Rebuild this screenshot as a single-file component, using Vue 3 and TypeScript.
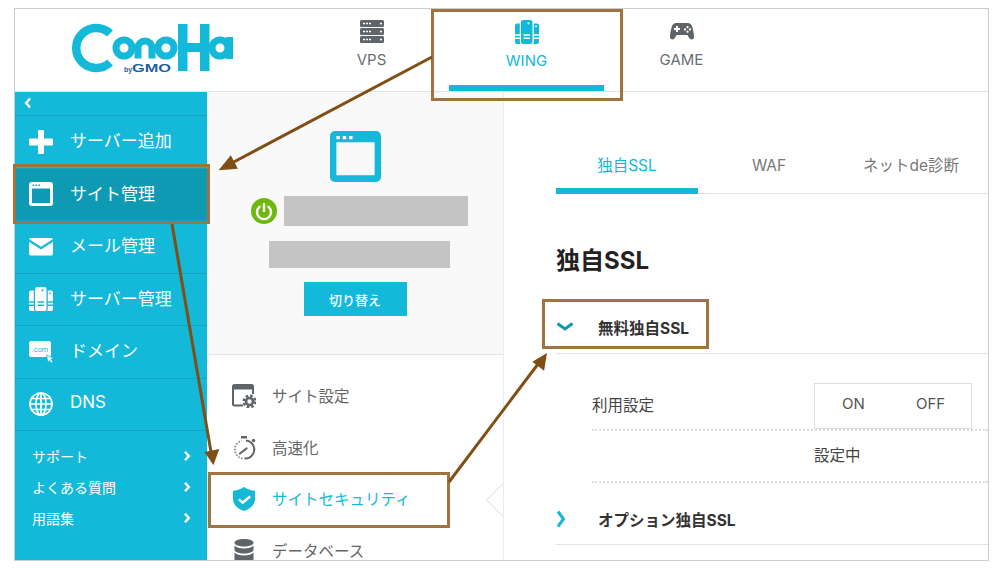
<script setup lang="ts">
const icons: Record<string, string> = {
  plus: '<path d="M9 1a1 1 0 0 1 1-1h4a1 1 0 0 1 1 1v7.500h8a1 1 0 0 1 1 1v5a1 1 0 0 1-1 1h-8V23a1 1 0 0 1-1 1h-4a1 1 0 0 1-1-1v-7.500H1a1 1 0 0 1-1-1v-5a1 1 0 0 1 1-1h8z"/>',
  site: '<path fill-rule="evenodd" d="M3 0h18a3 3 0 0 1 3 3v18a3 3 0 0 1-3 3H3a3 3 0 0 1-3-3V3a3 3 0 0 1 3-3zM3 6.500V21h18V6.500zM3.500 2.500v1.500H5V2.500zM6.500 2.500v1.500H8V2.500zM9.500 2.500v1.500H11V2.500z"/>',
  mail: '<path d="M2 3h20c1 0 1.600.6 1.800 1.300L12 11.800.2 4.300C.4 3.600 1 3 2 3z"/><path d="M0 6.800l12 7.700 12-7.700V18.500a2 2 0 0 1-2 2H2a2 2 0 0 1-2-2z"/>',
  server: '<path fill-rule="evenodd" d="M9 0h6.500A2 2 0 0 1 17.500 2v20a2 2 0 0 1-2 2H8a2 2 0 0 1-2-2V2.500A2.500 2.500 0 0 1 8.500 0zM13.500 2.300a1 1 0 1 0 .01 0zM8.500 14.200v1.600h6.500v-1.600zM8.500 17.500v1.600h6.500v-1.600z"/><path fill-rule="evenodd" d="M4.800 3.500v17.500q0 2 .8 3H2a2 2 0 0 1-2-2V5.500a2 2 0 0 1 2-2zM0 14.200v1.600h4.800v-1.600zM0 17.500v1.600h4.800v-1.600z"/><path fill-rule="evenodd" d="M18.800 3.500H22a2 2 0 0 1 2 2V22a2 2 0 0 1-2 2h-3.800q.6-1 .6-3zM21 5.500a.9.9 0 1 0 .01 0zM18.800 14.200v1.600H24v-1.600zM18.800 17.500v1.600H24v-1.600z"/>',
  domain: '<rect x="0" y="1" width="22" height="16" rx="2"/><text x="11" y="12" text-anchor="middle" font-size="7.500" font-family="Liberation Sans, sans-serif" fill="#14b8d9">.com</text><path d="M17.500 15l7 3-2.500 1.300 2 2.500-1.500 1.200-2-2.500-1.500 2.300z" stroke="#14b8d9" stroke-width=".8"/>',
  dns: '<g fill="none" stroke="#fff" stroke-width="1.700"><circle cx="12" cy="12" r="11"/><ellipse cx="12" cy="12" rx="5" ry="11"/><path d="M12 1v22M1 12h22M2.800 6.500h18.400M2.800 17.500h18.400"/></g>',
}

const menuItems = [
  { label: 'サーバー追加', icon: 'plus' },
  { label: 'サイト管理', icon: 'site', active: true },
  { label: 'メール管理', icon: 'mail' },
  { label: 'サーバー管理', icon: 'server' },
  { label: 'ドメイン', icon: 'domain' },
  { label: 'DNS', icon: 'dns' },
]

const subLinks = ['サポート', 'よくある質問', '用語集']
const tabs = ['独自SSL', 'WAF', 'ネットde診断']
</script>

<template>
  <div class="page">
    <div class="frame">
      <header class="header">
        <div class="logo" aria-label="ConoHa by GMO">
          <svg width="170" height="54" viewBox="70 22 170 54">
            <g fill="none" stroke="#14b8d9">
              <path d="M110 33.500a20 20 0 1 0 0 29" stroke-width="8.500" />
              <circle cx="124" cy="48" r="8" stroke-width="7" />
              <path d="M138 58.500V48a7 7 0 0 1 14 0v10.500" stroke-width="7" />
              <circle cx="166" cy="48" r="8" stroke-width="7" />
              <circle cx="220" cy="48" r="8" stroke-width="7" />
            </g>
            <g fill="#14b8d9">
              <rect x="178" y="24" width="9.500" height="47" />
              <rect x="200" y="24" width="9.500" height="47" />
              <rect x="184" y="43" width="20" height="9" />
              <rect x="226" y="37" width="7" height="22" />
            </g>
            <text x="124" y="72" font-size="7" font-weight="700" fill="#1f5f9e" font-family="Liberation Sans, sans-serif">by</text>
            <text x="132" y="72" font-size="10" font-weight="700" fill="#1f5f9e" font-family="Liberation Sans, sans-serif" textLength="39" lengthAdjust="spacingAndGlyphs">GMO</text>
          </svg>
        </div>
        <nav class="nav">
          <a class="nav-item">
            <svg class="nav-icon" width="24" height="23" viewBox="0 0 24 23">
              <path fill-rule="evenodd" d="M1.500 0h21A1.500 1.500 0 0 1 24 1.500v4A1.500 1.500 0 0 1 22.500 7h-21A1.500 1.500 0 0 1 0 5.500v-4A1.500 1.500 0 0 1 1.500 0zM3 2.700v1.600h2V2.700zM6 2.700v1.600h2V2.700zM9 2.700v1.600h2V2.700zM21 2.400a1.100 1.100 0 1 0 .01 0z" />
              <path fill-rule="evenodd" d="M1.500 8h21A1.500 1.500 0 0 1 24 9.500v4a1.500 1.500 0 0 1-1.500 1.500h-21A1.500 1.500 0 0 1 0 13.500v-4A1.500 1.500 0 0 1 1.500 8zM3 10.700v1.600h2v-1.600zM6 10.700v1.600h2v-1.600zM9 10.700v1.600h2v-1.600zM21 10.400a1.100 1.100 0 1 0 .01 0z" />
              <path fill-rule="evenodd" d="M1.500 16h21a1.500 1.500 0 0 1 1.500 1.500v4a1.500 1.500 0 0 1-1.500 1.500h-21A1.500 1.500 0 0 1 0 21.500v-4A1.500 1.500 0 0 1 1.500 16zM3 18.700v1.600h2v-1.600zM6 18.700v1.600h2v-1.600zM9 18.700v1.600h2v-1.600zM21 18.400a1.100 1.100 0 1 0 .01 0z" />
            </svg>
            <span>VPS</span>
          </a>
          <a class="nav-item active">
            <svg class="nav-icon" width="24" height="24" viewBox="0 0 24 24" v-html="icons.server"></svg>
            <span>WING</span>
          </a>
          <a class="nav-item">
            <svg class="nav-icon" width="24" height="23" viewBox="0 0 24 23">
              <path fill-rule="evenodd" d="M6.500 3h11c2.800 0 4.200 1.500 5 4.500.8 3.200 1.500 6.500 1.500 9 0 1.800-1 3-2.300 3-1.200 0-2-.8-3-2.200L17.500 15h-11l-1.200 2.300c-1 1.400-1.800 2.200-3 2.200C1 19.500 0 18.300 0 16.500c0-2.500.7-5.800 1.500-9C2.300 4.500 3.700 3 6.500 3zM6 6v2H4v2h2v2h2v-2h2V8H8V6zM17.500 6a1.100 1.100 0 1 0 .01 0zM15 8.300a1.100 1.100 0 1 0 .01 0zM20 8.300a1.100 1.100 0 1 0 .01 0zM17.500 10.600a1.100 1.100 0 1 0 .01 0z" />
            </svg>
            <span>GAME</span>
          </a>
        </nav>
      </header>

      <div class="body">
        <aside class="sidebar">
          <div class="collapse">
            <svg width="8" height="12" viewBox="0 0 8 12"><path d="M6 1.500 2.200 6 6 10.500" /></svg>
          </div>
          <a v-for="item in menuItems" :key="item.label" class="menu-item" :class="{ active: item.active }">
            <svg class="menu-icon" width="24" height="24" viewBox="0 0 24 24" v-html="icons[item.icon]"></svg>
            <span>{{ item.label }}</span>
          </a>
          <ul class="sub-links">
            <li v-for="link in subLinks" :key="link">
              <span>{{ link }}</span>
              <svg width="8" height="12" viewBox="0 0 8 12"><path d="M2 1.800 5.800 6 2 10.200" /></svg>
            </li>
          </ul>
        </aside>

        <section class="middle">
          <div class="site-panel">
            <svg class="site-icon" width="51" height="51" viewBox="0 0 52 52">
              <path fill="#14b8d9" fill-rule="evenodd" d="M5 0h42a5 5 0 0 1 5 5v42a5 5 0 0 1-5 5H5a5 5 0 0 1-5-5V5a5 5 0 0 1 5-5zM6.500 11.500v33.500h39V11.500zM6.500 5v3.500h3.500V5zM13 5v3.500h3.500V5zM19.500 5v3.500H23V5z" />
            </svg>
            <div class="name-row">
              <svg width="26" height="26" viewBox="0 0 26 26">
                <circle cx="13" cy="13" r="13" fill="#6fb90f" />
                <path d="M8.500 8.800a7 7 0 1 0 9 0" fill="none" stroke="#fff" stroke-width="2.400" stroke-linecap="round" />
                <path d="M13 6v7" fill="none" stroke="#fff" stroke-width="2.400" stroke-linecap="round" />
              </svg>
              <div class="mask name-mask"></div>
            </div>
            <div class="mask domain-mask"></div>
            <button class="switch-button">切り替え</button>
          </div>

          <ul class="site-menu">
            <li>
              <svg width="24" height="24" viewBox="0 0 24 24">
                <path d="M11 21.500H2.500A1.500 1.500 0 0 1 1 20V2.500A1.500 1.500 0 0 1 2.500 1h17A1.500 1.500 0 0 1 21 2.500V10" fill="none" stroke="#5f6468" stroke-width="2" />
                <path d="M1 2h20v3.500H1z" fill="#5f6468" />
                <circle cx="17.500" cy="17.500" r="3.500" fill="none" stroke="#5f6468" stroke-width="2.600" />
                <circle cx="17.500" cy="17.500" r="5.800" fill="none" stroke="#5f6468" stroke-width="2.400" stroke-dasharray="2.600 1.950" />
              </svg>
              <span>サイト設定</span>
            </li>
            <li>
              <svg width="24" height="24" viewBox="0 0 24 24">
                <path d="M14 4.500a9 9 0 1 1-1.500 18" fill="none" stroke="#5f6468" stroke-width="2" />
                <path d="M10.500 22.400a9 9 0 0 1-1-17.600" fill="none" stroke="#8a8e91" stroke-width="2" stroke-dasharray="1.500 1.500" />
                <path d="M9 0h6v2.500h-6z" fill="#5f6468" />
                <circle cx="21.500" cy="4.500" r="1.700" fill="#5f6468" />
                <path d="M8 17.500l6.500-5" fill="none" stroke="#5f6468" stroke-width="2.200" stroke-linecap="round" />
              </svg>
              <span>高速化</span>
            </li>
            <li class="active">
              <svg width="24" height="24" viewBox="0 0 24 24">
                <path fill="#14b8d9" fill-rule="evenodd" d="M12 0c3 2.200 7 3.500 11 3.800v8.200c0 5.500-4.500 9.700-11 12C5.500 21.700 1 17.500 1 12V3.800C5 3.500 9 2.200 12 0zM17.500 8.500 10.500 14l-3-2.500-1.500 1.800 4.700 4 8.400-7z" />
              </svg>
              <span>サイトセキュリティ</span>
            </li>
            <li>
              <svg width="24" height="24" viewBox="0 0 24 24">
                <path fill="#5f6468" d="M12 0c5 0 9.500 1.500 9.500 3.700S17 7.400 12 7.400 2.500 5.900 2.500 3.700 7 0 12 0z" />
                <path fill="#5f6468" d="M2.500 6.500C4 8.500 8 9.500 12 9.500s8-1 9.500-3v4.200c0 2.200-4.500 3.700-9.500 3.700s-9.500-1.500-9.500-3.700z" />
                <path fill="#5f6468" d="M2.500 13.500c1.500 2 5.500 3 9.500 3s8-1 9.500-3v6.800c0 2.200-4.500 3.700-9.500 3.700s-9.500-1.500-9.500-3.700z" />
              </svg>
              <span>データベース</span>
            </li>
          </ul>
          <div class="notch"></div>
        </section>

        <main class="content">
          <div class="tabs">
            <a v-for="(tab, i) in tabs" :key="tab" class="tab" :class="{ active: i === 0 }">{{ tab }}</a>
          </div>
          <h2 class="title">独自SSL</h2>

          <div class="accordion open">
            <svg width="18" height="10" viewBox="0 0 18 10"><path d="M1.500 1.500 9 7l7.500-5.500" /></svg>
            <span>無料独自SSL</span>
          </div>
          <div class="setting-row first">
            <span class="setting-label">利用設定</span>
            <div class="toggle"><span>ON</span><span>OFF</span></div>
          </div>
          <div class="setting-row status">
            <span class="setting-label"></span>
            <span>設定中</span>
          </div>
          <div class="accordion closed">
            <svg width="10" height="18" viewBox="0 0 10 18"><path d="M2 1.500 7.500 9 2 16.500" /></svg>
            <span>オプション独自SSL</span>
          </div>
        </main>
      </div>
    </div>

    <!-- annotations drawn over the screenshot -->
    <div class="note note-wing"></div>
    <div class="note note-site"></div>
    <div class="note note-security"></div>
    <div class="note note-ssl"></div>
    <svg class="arrows" width="1000" height="568" viewBox="0 0 1000 568">
      <g stroke="#7f4f16" stroke-width="3" fill="#7f4f16">
        <line x1="432" y1="57" x2="230" y2="164" />
        <path d="M222 168.500l8.500-10.500 5 9.500z" />
        <line x1="172" y1="224" x2="211" y2="452" />
        <path d="M213 462l-6-9 10-2z" />
        <line x1="449" y1="482" x2="538" y2="364" />
        <path d="M545 356l-2 12-8-6z" />
      </g>
    </svg>
  </div>
</template>

<style>
body {
  background: #fff;
}
</style>

<style scoped>
.page {
  position: relative;
  width: 1000px;
  height: 568px;
  padding: 8px 0 0 14px;
  box-sizing: border-box;
  overflow: hidden;
  font-family: Inter, 'Noto Sans CJK JP', sans-serif;
  color: #666;
}

.frame {
  width: 975px;
  height: 553px;
  box-sizing: border-box;
  border: 1px solid #ccc;
  overflow: hidden;
  display: flex;
  flex-direction: column;
}

.header {
  position: relative;
  height: 83px;
  flex: none;
  box-sizing: border-box;
  border-bottom: 1px solid #e2e2e2;
  display: flex;
}

.logo {
  width: 279px;
  padding: 13px 0 0 55px;
  box-sizing: border-box;
}

.nav {
  display: flex;
}

.nav-item {
  width: 155px;
  box-sizing: border-box;
  padding-top: 11px;
  display: flex;
  flex-direction: column;
  align-items: center;
  font-size: 15px;
  color: #6a6e72;
  fill: #5f6468;
}

.nav-item span {
  margin-top: 7px;
}

.nav-icon {
  flex: none;
}

.nav-item.active {
  color: #14b8d9;
  fill: #14b8d9;
  border-bottom: 6px solid #14b8d9;
}

.body {
  flex: 1;
  min-height: 0;
  display: flex;
}

.sidebar {
  width: 192px;
  flex: none;
  background: #14b8d9;
  color: #fff;
  fill: #fff;
}

.collapse {
  height: 24px;
  box-sizing: border-box;
  border-bottom: 1px solid #10a5c3;
  padding: 5px 0 0 9px;
}

.collapse svg {
  display: block;
}

.collapse svg path,
.sub-links svg path {
  fill: none;
  stroke: #fff;
  stroke-width: 2.4;
}

.menu-item {
  height: 52.5px;
  box-sizing: border-box;
  border-bottom: 1px solid #10a5c3;
  padding-left: 14px;
  display: flex;
  align-items: center;
  gap: 17px;
  font-size: 17px;
}

.menu-item span {
  padding-bottom: 4px;
}

.menu-item.active {
  background: #0f9ab4;
}

.sub-links {
  list-style: none;
  margin: 0;
  padding: 10px 16px 0 17px;
  font-size: 14px;
}

.sub-links li {
  height: 30.8px;
  display: flex;
  align-items: center;
  justify-content: space-between;
}

.middle {
  position: relative;
  width: 297px;
  flex: none;
  box-sizing: border-box;
  border-right: 1px solid #ececec;
  overflow: hidden;
}

.site-panel {
  height: 263px;
  box-sizing: border-box;
  background: #f9f9f9;
  border-bottom: 1px solid #e6e6e6;
  padding-top: 39px;
  display: flex;
  flex-direction: column;
  align-items: center;
}

.site-icon {
  flex: none;
}

.name-row {
  margin: 14px 0 0 8px;
  display: flex;
  align-items: center;
  gap: 7px;
}

.mask {
  background: #c4c4c4;
}

.name-mask {
  width: 184px;
  height: 30px;
}

.domain-mask {
  width: 181px;
  height: 27px;
  margin: 15px 0 0 8px;
}

.switch-button {
  width: 103px;
  height: 34px;
  margin-top: 14px;
  border: none;
  background: #14b8d9;
  color: #fff;
  font-family: inherit;
  font-size: 13px;
  font-weight: 500;
}

.site-menu {
  list-style: none;
  margin: 0;
  padding: 15px 0 0 25px;
}

.site-menu li {
  height: 51.7px;
  display: flex;
  align-items: center;
  gap: 16px;
  font-size: 15.5px;
  color: #666;
}

.site-menu li span {
  padding-bottom: 2px;
}

.site-menu li.active {
  color: #14b8d9;
}

.notch {
  position: absolute;
  right: -12px;
  top: 396px;
  width: 22px;
  height: 22px;
  background: #fff;
  border: 1px solid #e6e6e6;
  transform: rotate(45deg);
}

.content {
  flex: 1;
  min-width: 0;
  padding: 48px 0 0 52px;
  background: #fff;
}

.tabs {
  display: flex;
  height: 54px;
  box-shadow: inset 0 -1px 0 #e2e2e2;
}

.tab {
  width: 142px;
  box-sizing: border-box;
  padding-top: 15px;
  line-height: 22px;
  text-align: center;
  font-size: 15.5px;
  color: #777;
}

.tab.active {
  color: #14b8d9;
  border-bottom: 6px solid #14b8d9;
}

.title {
  margin: 50px 0 0;
  font-size: 24px;
  line-height: 34px;
  font-weight: 700;
  color: #222;
}

.accordion {
  display: flex;
  align-items: center;
  font-size: 15.5px;
  font-weight: 700;
  color: #333;
  border-bottom: 1px solid #e2e2e2;
  box-sizing: border-box;
}

.accordion svg {
  flex: none;
  fill: none;
  stroke: #14b8d9;
  stroke-width: 3;
}

.accordion.open {
  height: 54px;
  margin-top: 22px;
}

.accordion.open svg {
  stroke: #1296b0;
  margin-right: 24px;
}

.accordion.closed {
  height: 62px;
  padding-top: 10px;
}

.accordion.closed svg {
  margin-right: 32px;
}

.setting-row {
  margin-left: 36px;
  display: flex;
  align-items: center;
  border-bottom: 2px dotted #ddd;
  box-sizing: border-box;
  font-size: 15.5px;
  color: #444;
}

.setting-row.first {
  height: 77px;
  padding-top: 28px;
}

.setting-row.first .setting-label {
  padding-bottom: 4px;
}

.setting-row.status {
  height: 52px;
  padding-bottom: 4px;
}

.setting-label {
  width: 222px;
  flex: none;
}

.toggle {
  width: 158px;
  height: 46px;
  box-sizing: border-box;
  border: 1px solid #ddd;
  padding-bottom: 4px;
  display: flex;
  align-items: center;
  color: #555;
  font-size: 15px;
}

.toggle span {
  width: 77px;
  text-align: center;
}

.note {
  position: absolute;
  box-sizing: border-box;
  border: 3px solid #a0733f;
}

.note-wing {
  left: 431px;
  top: 9px;
  width: 192px;
  height: 92px;
}

.note-site {
  left: 13px;
  top: 164px;
  width: 197px;
  height: 60px;
}

.note-security {
  left: 208px;
  top: 472px;
  width: 242px;
  height: 56px;
}

.note-ssl {
  left: 542px;
  top: 299px;
  width: 167px;
  height: 50px;
}

.arrows {
  position: absolute;
  left: 0;
  top: 0;
  pointer-events: none;
}
</style>
